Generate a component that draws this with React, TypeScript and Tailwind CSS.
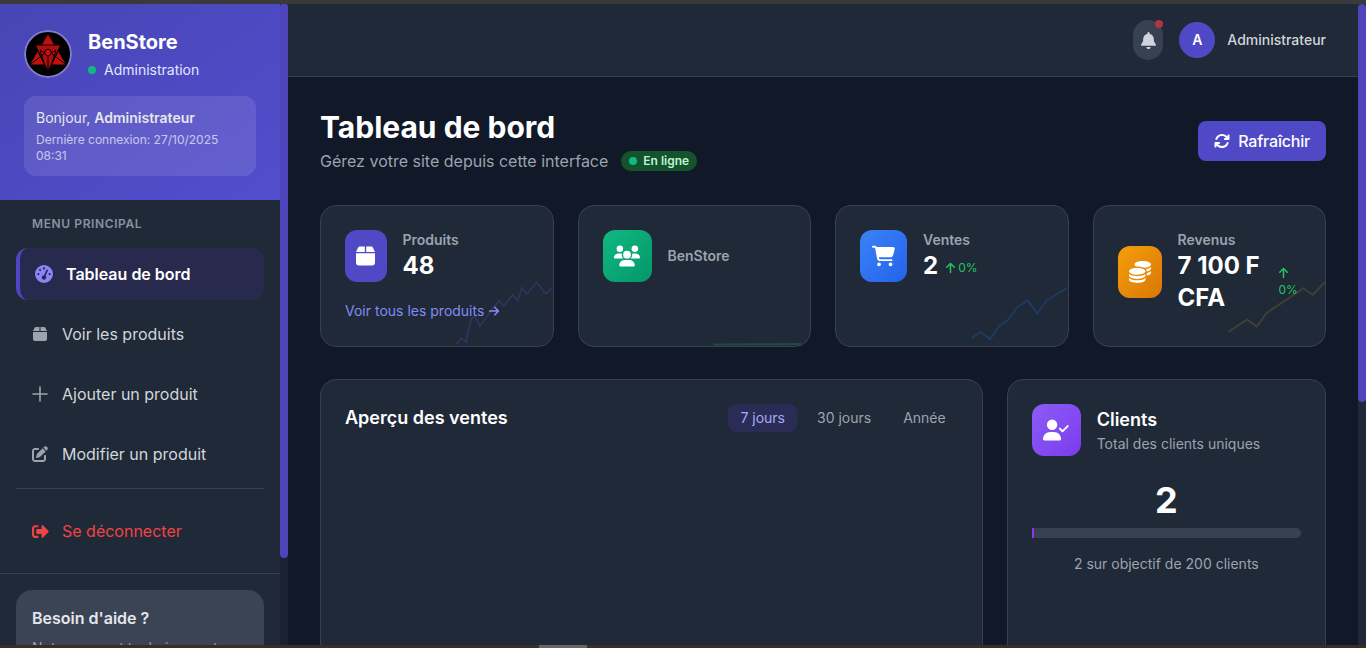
import React from "react";
import {
  FaArrowRight, FaArrowUp, FaArrowsRotate, FaBell, FaBox, FaCartShopping, FaCoins, FaPenToSquare,
  FaGaugeHigh, FaUserCheck, FaUsers,
} from "react-icons/fa6";
import { FaSignOutAlt } from "react-icons/fa";
import { Plus } from "lucide-react";

function Logo() {
  return (
    <svg viewBox="0 0 48 48" className="h-12 w-12 shrink-0 rounded-full">
      <circle cx="24" cy="24" r="23" fill="#000" stroke="#7f7cc9" strokeWidth="2" />
      <path d="M24 4.5 L42 34.5 L6 34.5 Z" fill="#c40d0d" />
      <path d="M11 15 L37 15 L24 41.5 Z" fill="#b30c0c" />
      <path d="M11 15 L37 15 L24 41.5 Z" fill="none" stroke="#000" strokeWidth="1.2" />
      <path d="M16 20 Q24 27 32 20 M24 25 L24 40 M16 20 L20 33 M32 20 L28 33 M6 34.5 L20 24 M42 34.5 L28 24" fill="none" stroke="#000" strokeWidth="1" />
      <circle cx="24" cy="22.5" r="3.2" fill="#d01010" stroke="#000" strokeWidth="1" />
    </svg>
  );
}

function Spark({ points, color }: { points: string; color: string }) {
  return (
    <svg viewBox="0 0 234 142" className="pointer-events-none absolute left-0 top-0 h-full w-full">
      <polyline points={points} fill="none" stroke={color} strokeWidth="2" />
    </svg>
  );
}

function Card({ children, spark, color }: { children: React.ReactNode; spark: string; color: string }) {
  return (
    <div className="relative h-[142px] overflow-hidden rounded-2xl border border-[#374151] bg-[#1f2937] p-6">
      <Spark points={spark} color={color} />
      <div className="relative">{children}</div>
    </div>
  );
}

function MenuItem({ icon, label }: { icon: React.ReactNode; label: string }) {
  return (
    <div className="flex h-[52px] items-center rounded-xl pl-4 text-base text-[#d1d5db]">
      <span className="flex w-[30px] shrink-0 text-[#9ca3af]">{icon}</span>
      {label}
    </div>
  );
}

export default function App() {
  return (
    <div className="flex h-[648px] w-[1366px] flex-col overflow-hidden bg-[#111827] font-['Inter',sans-serif] text-white">
      <div className="h-1 shrink-0 bg-[#3a3a3a]" />
      <div className="flex min-h-0 flex-1">
        {/* Sidebar */}
        <aside className="flex w-[288px] shrink-0 bg-[#1f2937]">
          <div className="w-[280px] shrink-0">
            <div className="bg-gradient-to-br from-[#4845b5] to-[#524ecd] p-6">
              <div className="mb-4 flex items-center gap-4">
                <Logo />
                <div>
                  <div className="text-xl font-bold leading-7">BenStore</div>
                  <div className="mt-1 flex items-center gap-2 text-sm text-[#e0e7ff]">
                    <span className="h-2 w-2 rounded-full bg-[#10b981]" />
                    Administration
                  </div>
                </div>
              </div>
              <div className="rounded-xl bg-white/10 p-3">
                <div className="text-sm text-[#e5e7eb]">
                  Bonjour, <span className="font-semibold">Administrateur</span>
                </div>
                <div className="mt-1 text-xs leading-4 text-white/65">
                  Dernière connexion: 27/10/2025 08:31
                </div>
              </div>
            </div>
            <div className="px-4 pt-4">
              <div className="mb-4 px-4 text-xs font-semibold uppercase leading-4 tracking-wider text-[#8792a2]">
                Menu principal
              </div>
              <div className="flex flex-col gap-2">
                <div className="flex h-[52px] items-center rounded-xl border-l-4 border-[#4f46c5] bg-[#282a4d] pl-[15px] text-base font-semibold">
                  <FaGaugeHigh className="mr-[13px] h-[18px] w-[18px] text-[#8b85f8]" />
                  Tableau de bord
                </div>
                <MenuItem icon={<FaBox className="ml-[1px] h-4 w-[14px]" />} label="Voir les produits" />
                <MenuItem icon={<Plus className="-ml-[4px] h-6 w-6" strokeWidth={1.6} />} label="Ajouter un produit" />
                <MenuItem icon={<FaPenToSquare className="h-4 w-4" />} label="Modifier un produit" />
              </div>
              <div className="mt-2 border-t border-[#374151] pt-4">
                <div className="flex h-[52px] items-center pl-4 text-base text-[#ef4444]">
                  <span className="flex w-[30px] shrink-0"><FaSignOutAlt className="h-[17px] w-[17px]" /></span>
                  Se déconnecter
                </div>
              </div>
            </div>
            <div className="mt-4 border-t border-[#374151] px-4 pt-4">
              <div className="rounded-2xl bg-[#3b4454] p-4">
                <div className="mb-2 text-base font-semibold text-[#e5e7eb]">Besoin d'aide ?</div>
                <div className="text-sm text-[#9ca3af]">Notre support technique est</div>
              </div>
            </div>
          </div>
          <div className="w-2 shrink-0 bg-[#1a2130]">
            <div className="h-[554px] rounded-b-lg rounded-t-sm bg-[#4d45b9]" />
          </div>
        </aside>

        {/* Main */}
        <main className="min-w-0 flex-1">
          <header className="flex h-[73px] items-center justify-end gap-4 border-b border-[#374151] bg-[#1f2937] px-8">
            <div className="relative flex h-10 w-[30px] items-center justify-center rounded-full bg-[#374151] text-[#d1d5db]">
              <FaBell className="h-[17px] w-[15px]" />
              <span className="absolute right-0 top-0 h-2 w-2 rounded-full bg-[#b0353f]" />
            </div>
            <div className="flex items-center gap-3">
              <div className="flex h-9 w-9 items-center justify-center rounded-full bg-[#4f49c6] text-sm font-semibold">A</div>
              <span className="text-sm font-medium text-[#d1d5db]">Administrateur</span>
            </div>
          </header>
          <div className="px-8 pt-8">
            <div className="mb-8 flex items-center justify-between">
              <div>
                <h1 className="text-[30px] font-bold leading-9">Tableau de bord</h1>
                <div className="mt-1 flex items-center gap-[13px]">
                  <span className="text-base text-[#9ca3af]">Gérez votre site depuis cette interface</span>
                  <span className="flex h-5 items-center gap-1.5 rounded-full bg-[#14532d] px-2 text-xs font-semibold text-[#bbf7d0]">
                    <span className="h-2 w-2 rounded-full bg-[#10b981]" />
                    En ligne
                  </span>
                </div>
              </div>
              <div className="flex h-10 items-center gap-2 rounded-lg bg-[#4f49c6] px-4 text-base font-medium tracking-[-0.2px]">
                <FaArrowsRotate className="h-4 w-4" />
                Rafraîchir
              </div>
            </div>

            <div className="mb-8 grid grid-cols-4 gap-6">
              <Card color="#2e3358" spark="137,140 142,134 146.7,138 151.7,115 155.7,111.7 160.7,121.7 180,96 185,101.7 194,90 199.3,96 203.3,83.3 208.3,89.3 218.3,77.3 227.7,89.3 234,83">
                <div className="flex gap-4">
                  <div className="flex h-[52px] w-[41.5px] shrink-0 items-center justify-center rounded-xl bg-[#4f49c6]">
                    <FaBox className="h-[22px] w-[19px]" />
                  </div>
                  <div>
                    <div className="text-sm font-semibold text-[#9ca3af]">Produits</div>
                    <div className="text-2xl font-bold">48</div>
                  </div>
                </div>
                <div className="mt-[19px] flex items-center gap-1 text-sm text-[#818cf8]">
                  Voir tous les produits <FaArrowRight className="h-3 w-3" />
                </div>
              </Card>
              <Card color="#1f4a48" spark="136,140.5 225,140">
                <div className="flex h-[52px] items-center gap-4">
                  <div className="flex h-[52px] w-[49px] shrink-0 items-center justify-center rounded-xl bg-gradient-to-br from-[#10b981] to-[#059669]">
                    <FaUsers className="h-[26px] w-[26px]" />
                  </div>
                  <div className="text-sm font-semibold text-[#9ca3af]">BenStore</div>
                </div>
              </Card>
              <Card color="#1e3a5f" spark="137,134.3 146.3,127.7 156,135 165,121.7 174,115.7 183.6,102.7 194,95.7 203.6,109 213,96 234,83">
                <div className="flex gap-4">
                  <div className="flex h-[52px] w-[47px] shrink-0 items-center justify-center rounded-xl bg-gradient-to-br from-[#3b82f6] to-[#2563eb]">
                    <FaCartShopping className="h-[22px] w-[23px]" />
                  </div>
                  <div>
                    <div className="text-sm font-semibold text-[#9ca3af]">Ventes</div>
                    <div className="flex items-center gap-2">
                      <span className="text-2xl font-bold">2</span>
                      <span className="mt-1 flex items-center gap-[3px] text-xs text-[#22c55e]">
                        <FaArrowUp className="h-3 w-[9px]" />0%
                      </span>
                    </div>
                  </div>
                </div>
              </Card>
              <Card color="#3f3f35" spark="136,127.7 155,115 164.6,122.3 175,108.3 212,83.3 221.6,90 234,77">
                <div className="flex items-center gap-4">
                  <div className="flex h-[52px] w-[44px] shrink-0 items-center justify-center rounded-xl bg-gradient-to-br from-[#f59e0b] to-[#d97706]">
                    <FaCoins className="h-[22px] w-[22px]" />
                  </div>
                  <div>
                    <div className="text-sm font-semibold text-[#9ca3af]">Revenus</div>
                    <div className="flex items-center">
                      <span className="w-[101px] text-2xl font-bold">7 100 F CFA</span>
                      <span className="w-[22px] text-xs leading-4 text-[#22c55e]">
                        <FaArrowUp className="mb-[3px] h-3 w-[9px]" />0%
                      </span>
                    </div>
                  </div>
                </div>
              </Card>
            </div>

            <div className="grid grid-cols-3 gap-6">
              <div className="col-span-2 h-[400px] rounded-2xl border border-[#374151] bg-[#1f2937] p-6">
                <div className="flex items-center justify-between">
                  <h2 className="text-lg font-semibold">Aperçu des ventes</h2>
                  <div className="flex gap-2 text-sm">
                    <span className="rounded-lg bg-[#2b2c55] px-3 py-1 text-[#a5a9f5]">7 jours</span>
                    <span className="rounded-lg px-3 py-1 text-[#9ca3af]">30 jours</span>
                    <span className="rounded-lg px-3 py-1 text-[#9ca3af]">Année</span>
                  </div>
                </div>
              </div>
              <div className="h-[400px] rounded-2xl border border-[#374151] bg-[#1f2937] p-6">
                <div className="flex items-center gap-4">
                  <div className="flex h-[52px] w-[49px] shrink-0 items-center justify-center rounded-xl bg-gradient-to-br from-[#8b5cf6] to-[#7c3aed]">
                    <FaUserCheck className="h-[22px] w-[26px]" />
                  </div>
                  <div>
                    <div className="text-lg font-semibold leading-7">Clients</div>
                    <div className="text-sm text-[#9ca3af]">Total des clients uniques</div>
                  </div>
                </div>
                <div className="mt-6 text-center text-4xl font-bold leading-10">2</div>
                <div className="mt-2 h-2.5 rounded-full bg-[#374151]">
                  <div className="h-full bg-[#9333ea]" style={{ width: "1%" }} />
                </div>
                <div className="mt-4 text-center text-sm text-[#9ca3af]">2 sur objectif de 200 clients</div>
              </div>
            </div>
          </div>
        </main>

        {/* Page scrollbar */}
        <div className="w-2 shrink-0 bg-[#1f2937]">
          <div className="h-[398px] rounded-full bg-[#4d45b9]" />
        </div>
      </div>
      <div className="flex h-[3px] shrink-0 bg-[#3a2e22]">
        <div className="ml-[539px] h-full w-12 bg-[#666]" />
      </div>
    </div>
  );
}
